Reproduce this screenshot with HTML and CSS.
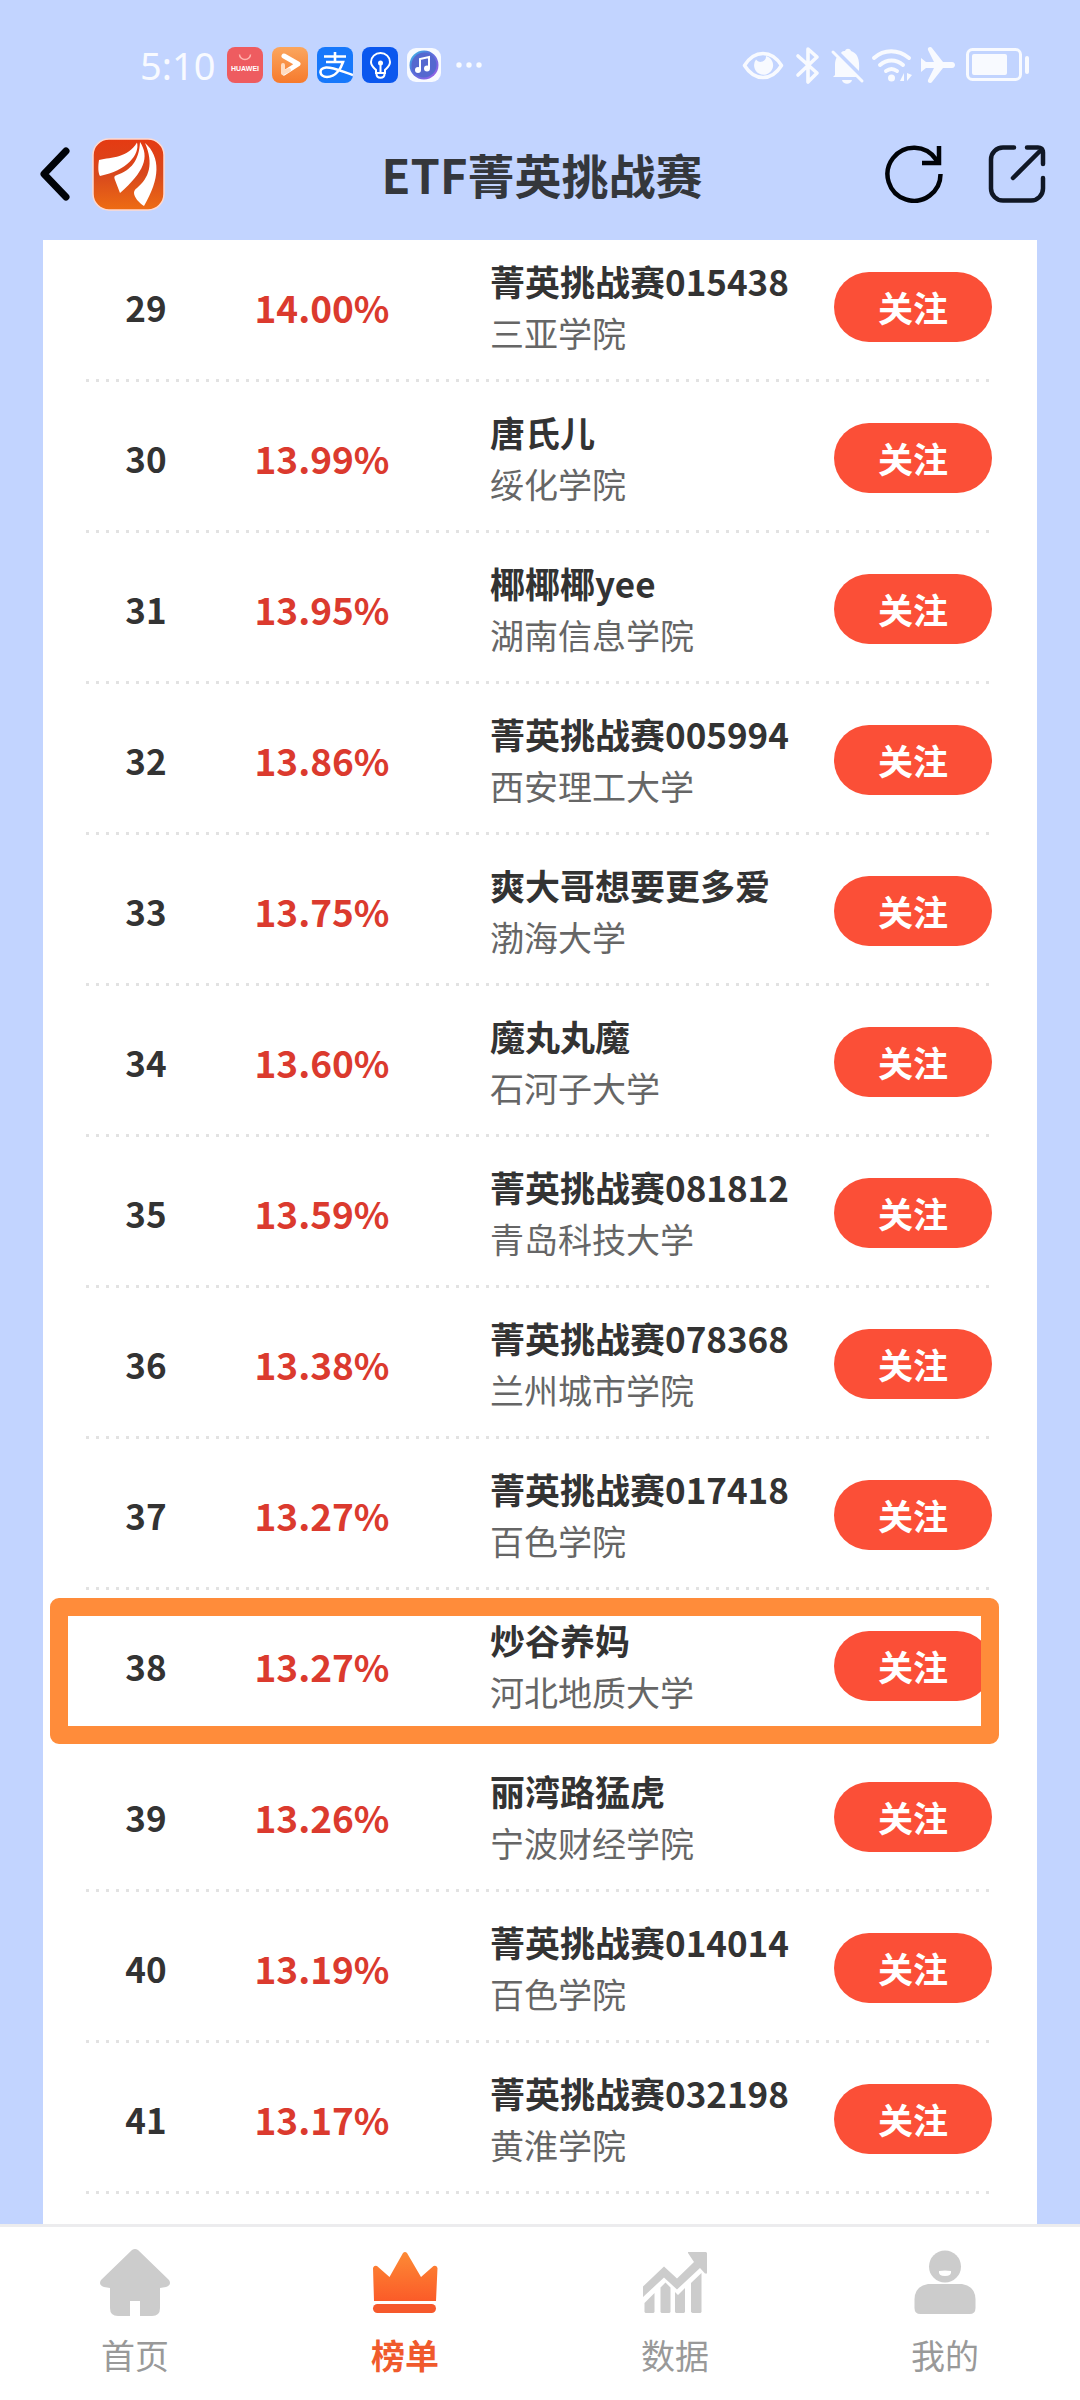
FILE: index.html
```html
<!DOCTYPE html>
<html lang="zh-CN">
<head>
<meta charset="utf-8">
<meta name="viewport" content="width=device-width, initial-scale=1">
<title>ETF菁英挑战赛</title>
<link rel="stylesheet" href="styles.css">
</head>
<body>
<div class="app">
  <div class="status">
    <div class="status-left">
      <span class="clock">5:10</span>
      <svg class="app-icon" viewBox="0 0 36 36" role="img" aria-label="HUAWEI">
        <rect width="36" height="36" rx="8" fill="#ee5c60"/>
        <path d="M12.500 7.500a5.500 5 0 0 0 11 0" fill="none" stroke="#ffb3ae" stroke-width="1.500"/>
        <text x="18" y="24" text-anchor="middle" class="brand">HUAWEI</text>
      </svg>
      <svg class="app-icon" viewBox="0 0 36 36" aria-hidden="true">
        <defs><linearGradient id="video" x2="0" y2="1"><stop stop-color="#fba65e"/><stop offset="1" stop-color="#f67a2d"/></linearGradient></defs>
        <rect width="36" height="36" rx="8" fill="url(#video)"/>
        <path d="M12 9l14 8-14 9" fill="none" stroke="#fff" stroke-width="5" stroke-linecap="round" stroke-linejoin="round"/>
        <path d="M11 18v8l6-3" fill="none" stroke="#ffdcc2" stroke-width="4" stroke-linecap="round" stroke-linejoin="round"/>
      </svg>
      <svg class="app-icon" viewBox="0 0 36 36" aria-hidden="true">
        <rect width="36" height="36" rx="8" fill="#1778fb"/>
        <path d="M7 9.500h22M18 5v10M9 15h17c-2 6-7 15-16 15-8 0-9-9-1-9.500 7-.5 16 4 27 7.500" fill="none" stroke="#fff" stroke-width="2.600"/>
      </svg>
      <svg class="app-icon" viewBox="0 0 36 36" aria-hidden="true">
        <rect width="36" height="36" rx="8" fill="#0b57ee"/>
        <path d="M14 26v-3c-2-2-5-4-5-8a9.500 9 0 0 1 19 0c0 4-3 6-5 8v3zM14.500 27c0 5 8 5 8 0M18.500 25v-7" fill="none" stroke="#fff" stroke-width="2"/>
        <circle cx="18.500" cy="16" r="2.500" fill="#fff"/>
      </svg>
      <svg class="app-icon music" viewBox="0 0 34 34" aria-hidden="true">
        <defs><linearGradient id="music" x2="1" y2="1"><stop stop-color="#3cc6ea"/><stop offset=".4" stop-color="#5670dc"/><stop offset="1" stop-color="#a25fe8"/></linearGradient></defs>
        <rect width="34" height="34" rx="9" fill="#f8faff"/>
        <circle cx="17" cy="17" r="14.500" fill="url(#music)"/>
        <circle cx="17" cy="17" r="12.500" fill="#5568cf"/>
        <path d="M13 22V11l9-2v11" fill="none" stroke="#fff" stroke-width="2"/>
        <circle cx="11" cy="22" r="3" fill="#fff"/><circle cx="20" cy="20.500" r="3" fill="#fff"/>
      </svg>
      <svg class="dots" viewBox="0 0 26 8" fill="#f8faff" aria-hidden="true"><circle cx="3" cy="4" r="2.700"/><circle cx="13" cy="4" r="2.700"/><circle cx="23" cy="4" r="2.700"/></svg>
    </div>
    <svg class="status-right" viewBox="0 0 288 40" fill="none" stroke="#f8faff" stroke-linecap="round" stroke-linejoin="round" aria-hidden="true">
      <path d="M2.500 20.500c10-16 27-16 37 0-10 16-27 16-37 0z" stroke-width="3.500"/>
      <path d="M14 14.500a9.500 9.500 0 1 0 10-3.500 5.500 5.500 0 0 1-10 3.500z" fill="#f8faff" stroke="none"/>
      <path d="M56 11l19 17-9 9V4l9 8-19 18" stroke-width="3.600"/>
      <path d="M93 30V20c0-3 .5-6 2-8l20 20H91zM99 8c1-2 3-2 4-2 1-3 5-3 6 0 6 2 9 7 8 20z" fill="#f8faff" stroke="none"/>
      <path d="M91 7l29 29" stroke-width="3"/>
      <path d="M100 35h10c-1 5-9 5-10 0z" fill="#f8faff" stroke="none"/>
      <path d="M132 13c10-9 24-9 35 0M138 20c7-6 16-6 23 0M144 26c4-3 7-3 11 0" stroke-width="4"/>
      <circle cx="149.500" cy="33" r="3.500" fill="#f8faff" stroke="none"/>
      <path d="M162 28v8h-4zM165 28v8l5-6z" fill="#f8faff" stroke="none" />
      <path d="M179 13l5 4h8l-6-12c-1-3 3-4 4-2l11 14h9c4 0 4 6 0 6h-9l-11 14c-1 2-5 1-4-2l6-12h-8l-5 4z" fill="#f8faff" stroke="none"/>
      <rect x="225.500" y="4.500" width="53" height="30" rx="5" stroke-width="3"/>
      <rect x="230" y="9" width="35" height="21" rx="2" fill="#f8faff" stroke="none"/>
      <path d="M285 13v14" stroke-width="4"/>
    </svg>
  </div>

  <header class="header">
    <div class="header-side">
      <button class="icon-button" type="button" aria-label="返回">
        <svg width="32" height="56" viewBox="0 0 32 56" fill="none" stroke="#000308" stroke-width="7" stroke-linecap="round" stroke-linejoin="round"><path d="M28 5L6 28l22 23"/></svg>
      </button>
      <svg class="logo" viewBox="0 0 73 73" role="img" aria-label="应用标志">
        <defs><linearGradient id="logo" x2="0" y2="1"><stop stop-color="#e53a12"/><stop offset=".5" stop-color="#d8481d"/><stop offset="1" stop-color="#ee6c13"/></linearGradient></defs>
        <rect x="1" y="1" width="71" height="71" rx="16" fill="url(#logo)" stroke="#ffd9d0" stroke-width="1.500"/>
        <g fill="#fff">
          <path d="M7 22c13-3 29-2 38-17.500 3 12-10 28-37 33.500-2-3-2-10-1-16z"/>
          <path d="M48 4c10 15 4 30-20 51l-5-13c-1-3-1-4 2-5 14-5 22-14 23-33z"/>
          <path d="M53 5c16 14 15 36-1 63-5-3-10-9-10-13 0-2 1-4 3-5 12-10 17-24 8-45z"/>
        </g>
      </svg>
    </div>
    <h1 class="title">ETF菁英挑战赛</h1>
    <div class="header-side header-actions">
      <button class="icon-button" type="button" aria-label="刷新">
        <svg width="58" height="58" viewBox="0 0 58 58" fill="none" stroke="#000308" stroke-width="4.500"><path d="M55.500 29A26.500 26.500 0 1 1 51 14.500L54 18M37 18h17V1"/></svg>
      </button>
      <button class="icon-button" type="button" aria-label="分享">
        <svg width="58" height="58" viewBox="0 0 58 58" fill="none" stroke="#101725" stroke-width="4.500" stroke-linecap="round" stroke-linejoin="round"><path d="M26 2.500H15a12 12 0 0 0-12 12v29a12 12 0 0 0 12 12h28a12 12 0 0 0 12-12V33M39 2.500h11a5 5 0 0 1 5 5V19M25 33L54 4"/></svg>
      </button>
    </div>
  </header>

  <main class="card">
    <table class="ranking">
      <colgroup><col class="col-rank"><col class="col-rate"><col><col class="col-action"></colgroup>
      <tbody>
        <tr><td class="rank">29</td><td class="rate">14.00%</td><td class="player"><div class="name">菁英挑战赛015438</div><div class="school">三亚学院</div></td><td class="action"><button class="follow" type="button">关注</button></td></tr>
        <tr><td class="rank">30</td><td class="rate">13.99%</td><td class="player"><div class="name">唐氏儿</div><div class="school">绥化学院</div></td><td class="action"><button class="follow" type="button">关注</button></td></tr>
        <tr><td class="rank">31</td><td class="rate">13.95%</td><td class="player"><div class="name">椰椰椰yee</div><div class="school">湖南信息学院</div></td><td class="action"><button class="follow" type="button">关注</button></td></tr>
        <tr><td class="rank">32</td><td class="rate">13.86%</td><td class="player"><div class="name">菁英挑战赛005994</div><div class="school">西安理工大学</div></td><td class="action"><button class="follow" type="button">关注</button></td></tr>
        <tr><td class="rank">33</td><td class="rate">13.75%</td><td class="player"><div class="name">爽大哥想要更多爱</div><div class="school">渤海大学</div></td><td class="action"><button class="follow" type="button">关注</button></td></tr>
        <tr><td class="rank">34</td><td class="rate">13.60%</td><td class="player"><div class="name">魔丸丸魔</div><div class="school">石河子大学</div></td><td class="action"><button class="follow" type="button">关注</button></td></tr>
        <tr><td class="rank">35</td><td class="rate">13.59%</td><td class="player"><div class="name">菁英挑战赛081812</div><div class="school">青岛科技大学</div></td><td class="action"><button class="follow" type="button">关注</button></td></tr>
        <tr><td class="rank">36</td><td class="rate">13.38%</td><td class="player"><div class="name">菁英挑战赛078368</div><div class="school">兰州城市学院</div></td><td class="action"><button class="follow" type="button">关注</button></td></tr>
        <tr><td class="rank">37</td><td class="rate">13.27%</td><td class="player"><div class="name">菁英挑战赛017418</div><div class="school">百色学院</div></td><td class="action"><button class="follow" type="button">关注</button></td></tr>
        <tr class="marked"><td class="rank">38</td><td class="rate">13.27%</td><td class="player"><div class="name">炒谷养妈</div><div class="school">河北地质大学</div></td><td class="action"><button class="follow" type="button">关注</button></td></tr>
        <tr><td class="rank">39</td><td class="rate">13.26%</td><td class="player"><div class="name">丽湾路猛虎</div><div class="school">宁波财经学院</div></td><td class="action"><button class="follow" type="button">关注</button></td></tr>
        <tr><td class="rank">40</td><td class="rate">13.19%</td><td class="player"><div class="name">菁英挑战赛014014</div><div class="school">百色学院</div></td><td class="action"><button class="follow" type="button">关注</button></td></tr>
        <tr><td class="rank">41</td><td class="rate">13.17%</td><td class="player"><div class="name">菁英挑战赛032198</div><div class="school">黄淮学院</div></td><td class="action"><button class="follow" type="button">关注</button></td></tr>
      </tbody>
    </table>
  </main>

  <nav class="tabs">
    <a class="tab" href="#home">
      <svg class="tab-icon" viewBox="0 0 70 70" fill="#ccc" aria-hidden="true"><path d="M32 3q3-2 6 0l31 30q3 5-3 7l-6 1v20q0 8-8 8H40V54H30v15H18q-8 0-8-8V41l-6-1q-6-2-3-7z"/></svg>
      <span>首页</span>
    </a>
    <a class="tab active" href="#ranking" aria-current="page">
      <svg class="tab-icon" viewBox="0 0 70 70" aria-hidden="true">
        <defs><linearGradient id="crown" x2="0" y2="1"><stop stop-color="#fd8a35"/><stop offset="1" stop-color="#fb5b28"/></linearGradient></defs>
        <path d="M4 54L3 21q1-3 4-2l12.500 11L33 6q2-2 4 0l14 24 12.500-11q3-1 4 2L66 54z" fill="url(#crown)"/>
        <rect x="3" y="57" width="63" height="9" rx="4.500" fill="#f6592c"/>
      </svg>
      <span>榜单</span>
    </a>
    <a class="tab" href="#data">
      <svg class="tab-icon" viewBox="0 0 70 70" fill="#ccc" aria-hidden="true"><path d="M3 39.500L24 19.500 37 31.500 54 15 48 6v-1h18l1 1v20.500h-2L60 21 37 42.500 24 30.500 3 50zM4.500 56l10-10v19l-1 1h-8l-1-1zM20.500 40.500l5-5 5 5V65l-1 1h-8l-1-1zM35 45l3 3 7-7v24l-1 1h-8l-1-1zM51 36l10.500-10v39l-1 1h-8l-1.500-1z"/></svg>
      <span>数据</span>
    </a>
    <a class="tab" href="#mine">
      <svg class="tab-icon" viewBox="0 0 70 70" fill="#ccc" aria-hidden="true"><circle cx="35" cy="19.500" r="16"/><path d="M18 37h34q13 2 13.500 15v9q0 6-6 6h-49q-6 0-6-6v-9Q5 39 18 37z"/><path d="M29 24q6-1 12 0 1 5-6 5t-6-5z" fill="#fff"/></svg>
      <span>我的</span>
    </a>
  </nav>
</div>
</body>
</html>
```
FILE: styles.css
```css
* {
  box-sizing: border-box;
}

body {
  margin: 0;
  background: #c2d4ff;
  color: #333;
  font-family: "Noto Sans CJK SC", sans-serif;
}

button {
  padding: 0;
  border: 0;
  background: none;
  font: inherit;
}

svg {
  display: block;
  flex: none;
}

.app {
  display: flex;
  flex-direction: column;
  min-height: 100vh;
}

/* Status bar */
.status {
  display: flex;
  align-items: center;
  justify-content: space-between;
  height: 108px;
  padding: 22px 50px 0 140px;
  color: #f8faff;
}

.status-left {
  display: flex;
  align-items: center;
  gap: 9px;
}

.clock {
  width: 78px;
  font-size: 38px;
  line-height: 48px;
  font-family: "Noto Sans", "Noto Sans CJK SC", sans-serif;
}

.app-icon {
  width: 36px;
  height: 36px;
}

.music {
  width: 34px;
  height: 34px;
}

.brand {
  fill: #fff;
  font: bold 7px "Liberation Sans", sans-serif;
}

.dots {
  width: 26px;
  height: 8px;
  margin-left: 6px;
}

.status-right {
  width: 288px;
  height: 40px;
}

/* Title bar */
.header {
  display: flex;
  align-items: center;
  height: 132px;
  padding: 0 34px 0 38px;
}

.header-side {
  display: flex;
  flex: 1;
  align-items: center;
  gap: 22px;
}

.header-actions {
  justify-content: flex-end;
  gap: 45px;
}

.icon-button {
  display: block;
}

.logo {
  width: 73px;
  height: 73px;
}

.title {
  margin: 0;
  color: #34373c;
  font-size: 47px;
  line-height: 64px;
  font-weight: 700;
}

/* Ranking list, scrolled slightly under the title bar */
.card {
  flex: 1;
  margin: 0 43px;
  padding: 0 45px 29px 43px;
  overflow: hidden;
  background: #fff;
}

.ranking {
  width: 100%;
  margin-top: -9px;
  border-collapse: collapse;
  table-layout: fixed;
}

.col-rank {
  width: 120px;
}

.col-rate {
  width: 232px;
}

.col-action {
  width: 158px;
}

.ranking tr {
  position: relative;
  height: 151px;
  background: repeating-linear-gradient(90deg, #e2e2e2 0 3px, transparent 3px 10px) left bottom / 100% 3px no-repeat;
}

.ranking td {
  padding: 0;
  vertical-align: middle;
}

.rank {
  font-size: 35px;
  font-weight: 700;
  text-align: center;
}

.rate {
  color: #db3a2e;
  font-size: 37px;
  font-weight: 700;
  text-align: center;
}

.ranking .player {
  padding-left: 52px;
  line-height: 52px;
  white-space: nowrap;
}

.name {
  font-size: 35px;
  font-weight: 700;
}

.school {
  color: #666;
  font-size: 34px;
}

.follow {
  display: block;
  width: 100%;
  height: 70px;
  border-radius: 35px;
  background: #fb4f37;
  color: #fff;
  font-size: 35px;
  font-weight: 700;
  line-height: 70px;
}

/* Frame drawn over the highlighted row */
.marked .action::after {
  content: "";
  position: absolute;
  inset: 8px -7px -3px -36px;
  border: 18px solid #ff8c3a;
  border-radius: 9px;
  pointer-events: none;
}

/* Bottom tabs */
.tabs {
  display: grid;
  grid-template-columns: repeat(4, 1fr);
  border-top: 3px solid #ececee;
  background: #fff;
}

.tab {
  display: flex;
  flex-direction: column;
  align-items: center;
  gap: 12px;
  padding: 20px 0 19px;
  color: #999;
  font-size: 34px;
  line-height: 52px;
  text-decoration: none;
}

.tab-icon {
  width: 70px;
  height: 70px;
}

.active {
  color: #f05a2c;
  font-weight: 700;
}
```
